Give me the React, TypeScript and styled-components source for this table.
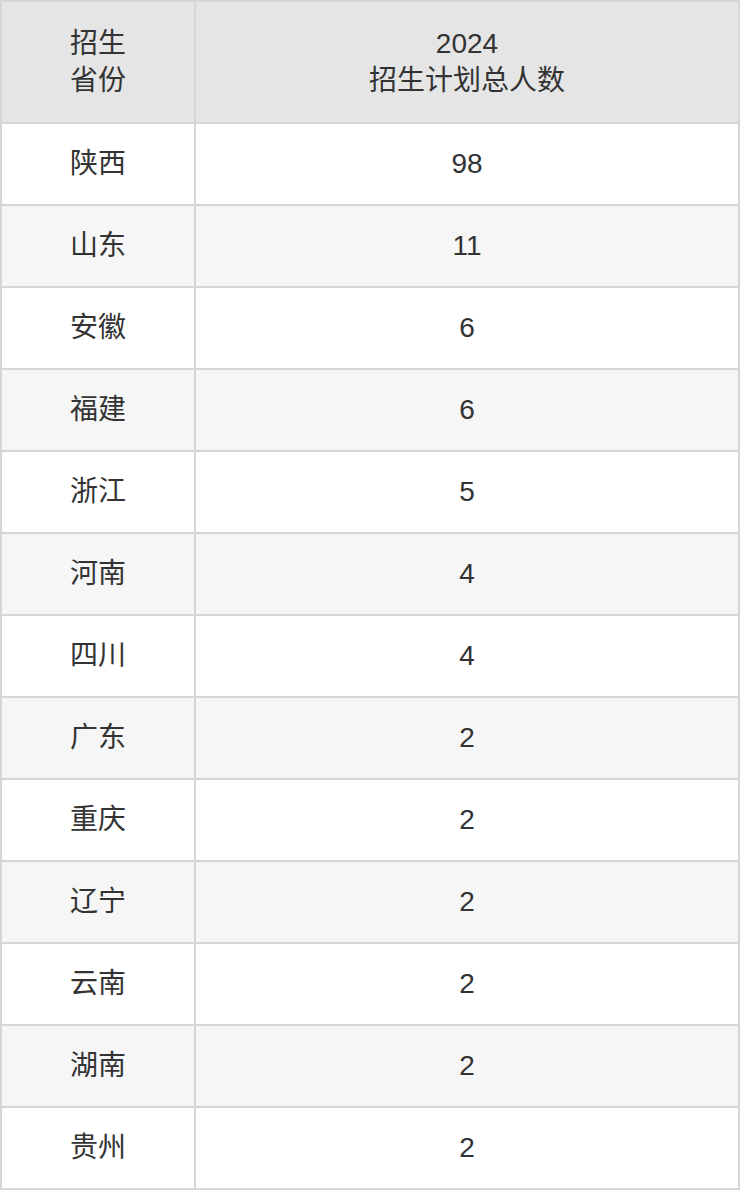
import React from 'react'
import styled, { createGlobalStyle } from 'styled-components'

const GlobalStyle = createGlobalStyle`
  html, body {
    margin: 0;
    padding: 0;
    background: #fff;
  }
  body {
    font-family: "Liberation Sans", "Noto Sans CJK SC", sans-serif;
    color: #333;
  }
`

const Table = styled.table`
  width: 740px;
  table-layout: fixed;
  border-collapse: separate;
  border-spacing: 0;
  border: 1px solid #d6d6d6;
  box-sizing: border-box;
  font-size: 28px;
  color: #333;
`

const HeadCell = styled.th<{ $width?: number }>`
  width: ${(p) => (p.$width ? `${p.$width}px` : 'auto')};
  height: 122px;
  padding: 0 8px;
  box-sizing: border-box;
  border: 1px solid #d6d6d6;
  background: #e5e5e5;
  font-weight: normal;
  line-height: 37px;
  text-align: center;
  vertical-align: middle;
`

const Row = styled.tr<{ $striped: boolean }>`
  background: ${(p) => (p.$striped ? '#f6f6f6' : '#fff')};
`

const Cell = styled.td`
  height: 82px;
  padding: 0 8px;
  box-sizing: border-box;
  border: 1px solid #d6d6d6;
  text-align: center;
  vertical-align: middle;
  line-height: 32px;
`

const rows: [string, number][] = [
  ['陕西', 98],
  ['山东', 11],
  ['安徽', 6],
  ['福建', 6],
  ['浙江', 5],
  ['河南', 4],
  ['四川', 4],
  ['广东', 2],
  ['重庆', 2],
  ['辽宁', 2],
  ['云南', 2],
  ['湖南', 2],
  ['贵州', 2],
]

const App: React.FC = () => {
  return (
    <>
      <GlobalStyle />
      <Table>
        <thead>
          <tr>
            <HeadCell $width={194}>
              招生
              <br />
              省份
            </HeadCell>
            <HeadCell>
              2024
              <br />
              招生计划总人数
            </HeadCell>
          </tr>
        </thead>
        <tbody>
          {rows.map(([province, count], i) => (
            <Row key={province} $striped={i % 2 === 1}>
              <Cell>{province}</Cell>
              <Cell>{count}</Cell>
            </Row>
          ))}
        </tbody>
      </Table>
    </>
  )
}

export default App
